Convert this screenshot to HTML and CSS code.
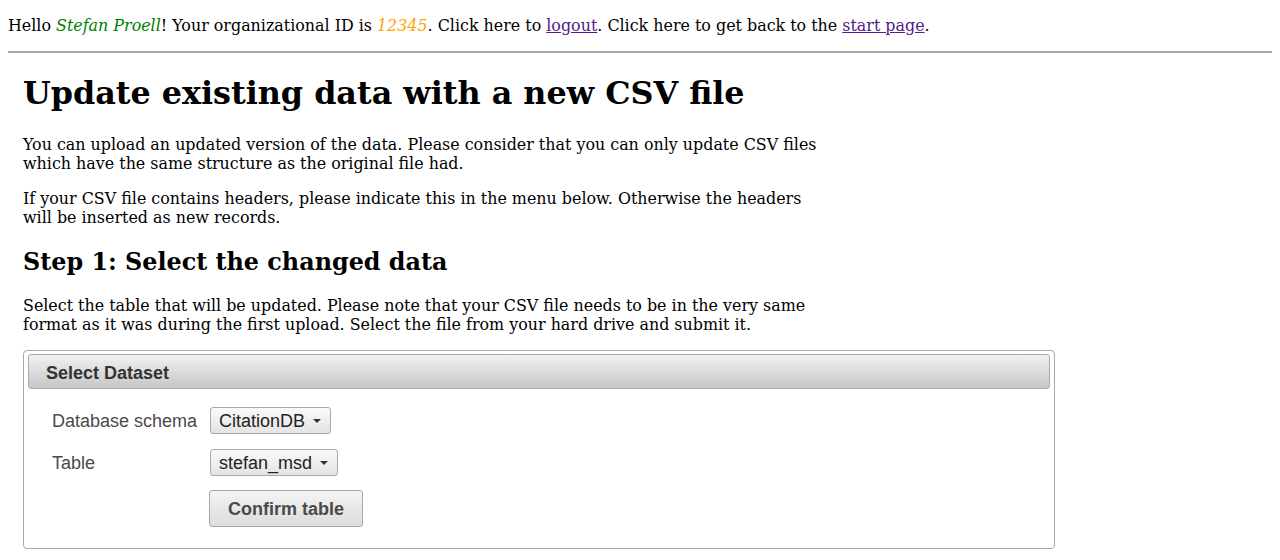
FILE: index.html
```html
<!DOCTYPE html>
<html>
<head>
<meta charset="utf-8">
<link rel="stylesheet" href="styles.css">
</head>
<body>
<div class="topbar">Hello <span class="user">Stefan Proell</span>! Your organizational ID is <span class="orgid">12345</span>. Click here to <a href="#" class="link">logout</a>. Click here to get back to the <a href="#" class="link">start page</a>.</div>
<hr class="rule">
<div class="content">
  <h1 class="title">Update existing data with a new CSV file</h1>
  <p class="text">You can upload an updated version of the data. Please consider that you can only update CSV files<br>which have the same structure as the original file had.</p>
  <p class="text">If your CSV file contains headers, please indicate this in the menu below. Otherwise the headers<br>will be inserted as new records.</p>
  <h2 class="step">Step 1: Select the changed data</h2>
  <p class="text">Select the table that will be updated. Please note that your CSV file needs to be in the very same<br>format as it was during the first upload. Select the file from your hard drive and submit it.</p>
  <div class="panel">
    <div class="panel-header">Select Dataset</div>
    <div class="panel-body">
      <div class="grid">
        <div class="label">Database schema</div>
        <div class="cell"><span class="menu">CitationDB<span class="caret"></span></span></div>
        <div class="label">Table</div>
        <div class="cell"><span class="menu">stefan_msd<span class="caret"></span></span></div>
        <div class="label"></div>
        <div class="cell"><span class="button">Confirm table</span></div>
      </div>
    </div>
  </div>
</div>
</body>
</html>
```
FILE: styles.css
```css
html, body { background: #fff; }
body {
  margin: 8px;
  font-family: "DejaVu Serif", serif;
  font-size: 15.9px;
  color: #000;
}
.topbar { padding-top: 8px; line-height: 19px; }
.user { color: green; font-style: italic; }
.orgid { color: orange; font-style: italic; }
.link { color: #551a8b; text-decoration: underline; }
.rule {
  margin: 16px 0 0 0;
  border: 0;
  border-top: 2px solid #aaa;
  height: 0;
}
.content { padding: 0 15px; }
.title {
  font-size: 31.8px;
  font-weight: bold;
  margin: 21px 0 24px;
  line-height: 37px;
}
.text { margin: 0 0 16px; line-height: 19px; }
.step {
  font-size: 23.85px;
  font-weight: bold;
  margin: 21px 0 20px;
  line-height: 28px;
}
.panel {
  width: 1022px;
  border: 1px solid #a8a8a8;
  border-radius: 4px;
  padding: 3px 4px 2px;
  margin-top: 15px;
  font-family: "Liberation Sans", Arial, sans-serif;
  font-size: 18px;
}
.panel-header {
  height: 33px;
  border: 1px solid #aaa;
  border-radius: 3px;
  background: linear-gradient(#f2f2f2, #c6c6c6);
  color: #333;
  font-weight: bold;
  line-height: 37px;
  padding-left: 17px;
}
.panel-body { padding: 18px 24px 19px; }
.grid {
  display: grid;
  grid-template-columns: 158px auto;
  row-gap: 15px;
  align-items: center;
  justify-items: start;
}
.label { color: #4a4a4a; line-height: 26px; }
.menu {
  display: inline-flex;
  align-items: center;
  height: 24px;
  border: 1px solid #a8a8a8;
  border-radius: 3px;
  background: linear-gradient(#fafafa, #e4e4e4);
  color: #222;
  padding: 1px 9px 0 8px;
}
.caret {
  display: inline-block;
  width: 0; height: 0;
  border-left: 4.5px solid transparent;
  border-right: 4.5px solid transparent;
  border-top: 4px solid #333;
  margin-left: 8px;
  margin-top: -1px;
}
.button {
  display: inline-block;
  height: 35px;
  line-height: 36px;
  border: 1px solid #a8a8a8;
  border-radius: 3px;
  background: linear-gradient(#f4f4f4, #dcdcdc);
  color: #4a4a4a;
  font-weight: bold;
  padding: 0 18px 0 18px;
  margin-left: -1px;
  margin-top: -1px;
}
```
